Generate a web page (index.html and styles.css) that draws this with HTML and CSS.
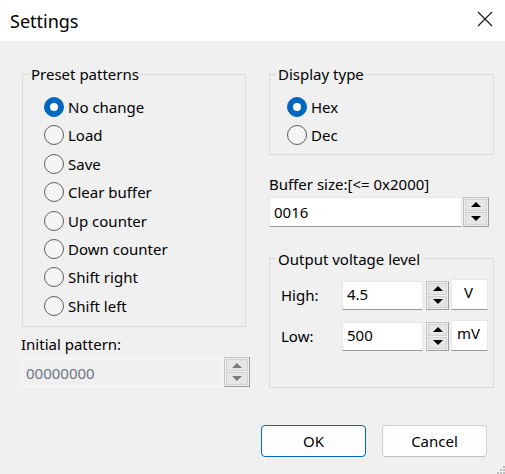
FILE: index.html
```
<!DOCTYPE html>
<html>
<head>
<meta charset="utf-8">
<link rel="stylesheet" href="styles.css">
</head>
<body>
<div class="window">
  <div class="titlebar">
    <span class="title">Settings</span>
    <svg class="close" width="16" height="16" viewBox="0 0 16 16"><path d="M1 1 L15 15 M15 1 L1 15" stroke="#1a1a1a" stroke-width="1.2" fill="none"/></svg>
  </div>
  <div class="main">
    <div class="col left">
      <fieldset class="group">
        <legend>Preset patterns</legend>
        <div class="group-body preset">
          <div class="radio-row"><span class="radio checked"></span><span>No change</span></div>
          <div class="radio-row"><span class="radio"></span><span>Load</span></div>
          <div class="radio-row"><span class="radio"></span><span>Save</span></div>
          <div class="radio-row"><span class="radio"></span><span>Clear buffer</span></div>
          <div class="radio-row"><span class="radio"></span><span>Up counter</span></div>
          <div class="radio-row"><span class="radio"></span><span>Down counter</span></div>
          <div class="radio-row"><span class="radio"></span><span>Shift right</span></div>
          <div class="radio-row"><span class="radio"></span><span>Shift left</span></div>
        </div>
      </fieldset>
      <div class="field-label initial-label">Initial pattern:</div>
      <div class="spin-row">
        <div class="edit disabled initial-edit">00000000</div>
        <div class="spin disabled-spin"><span class="sbtn"><i class="up"></i></span><span class="sbtn"><i class="down"></i></span></div>
      </div>
    </div>
    <div class="col right">
      <fieldset class="group">
        <legend>Display type</legend>
        <div class="group-body display">
          <div class="radio-row"><span class="radio checked"></span><span>Hex</span></div>
          <div class="radio-row"><span class="radio"></span><span>Dec</span></div>
        </div>
      </fieldset>
      <div class="field-label buffer-label">Buffer size:[&lt;= 0x2000]</div>
      <div class="spin-row">
        <div class="edit buffer-edit">0016</div>
        <div class="spin"><span class="sbtn"><i class="up"></i></span><span class="sbtn"><i class="down"></i></span></div>
      </div>
      <fieldset class="group voltage">
        <legend>Output voltage level</legend>
        <div class="group-body volt-body">
          <div class="volt-row">
            <span class="volt-label">High:</span>
            <div class="edit volt-edit">4.5</div>
            <div class="spin small"><span class="sbtn"><i class="up"></i></span><span class="sbtn"><i class="down"></i></span></div>
            <div class="edit unit">V</div>
          </div>
          <div class="volt-row">
            <span class="volt-label">Low:</span>
            <div class="edit volt-edit">500</div>
            <div class="spin small"><span class="sbtn"><i class="up"></i></span><span class="sbtn"><i class="down"></i></span></div>
            <div class="edit unit">mV</div>
          </div>
        </div>
      </fieldset>
    </div>
  </div>
  <div class="footer">
    <button class="btn default">OK</button>
    <button class="btn">Cancel</button>
  </div>
  <svg class="grip" width="8" height="8" viewBox="0 0 8 8"><rect x="6" y="0" width="2" height="2" fill="#bdbdbd"/><rect x="3" y="3" width="2" height="2" fill="#bdbdbd"/><rect x="6" y="3" width="2" height="2" fill="#bdbdbd"/><rect x="0" y="6" width="2" height="2" fill="#bdbdbd"/><rect x="3" y="6" width="2" height="2" fill="#bdbdbd"/><rect x="6" y="6" width="2" height="2" fill="#bdbdbd"/></svg>
</div>
</body>
</html>
```
FILE: styles.css
```
* { box-sizing: border-box; }
html, body { margin: 0; padding: 0; }
body {
  width: 505px;
  height: 474px;
  overflow: hidden;
  background: #f0f0f0;
  font-family: "Noto Sans", "Open Sans", sans-serif;
  font-size: 15px;
  color: #000;
}
.window { position: relative; width: 505px; height: 474px; }
.titlebar {
  height: 41px;
  background: #fff;
  display: flex;
  align-items: center;
  justify-content: space-between;
  padding: 0 12px 0 10px;
}
.title { font-size: 18px; color: #000; }
.close { margin-top: -3px; }
.main {
  display: grid;
  grid-template-columns: 228px 225px;
  column-gap: 19px;
  padding-left: 22px;
}
.col { display: flex; flex-direction: column; }
.group {
  margin: 23px 0 0 0;
  padding: 0;
  border: 1px solid #dadada;
  min-width: 0;
}
.left .group { width: 224px; }
.group legend {
  margin-left: 6px;
  padding: 0 2px;
  line-height: 20px;
  height: 20px;
}
.preset { padding: 8.8px 0 6px 21px; }
.display { padding: 8.8px 0 4px 17px; }
.radio-row {
  display: flex;
  align-items: center;
  height: 28.4px;
}
.radio {
  width: 20px;
  height: 20px;
  border-radius: 50%;
  border: 1px solid #5f5f5f;
  background: #f5f5f5;
  margin-right: 4px;
  flex: none;
  display: flex;
  align-items: center;
  justify-content: center;
}
.radio.checked {
  background: #0067c0;
  border-color: #0067c0;
}
.radio.checked::after {
  content: "";
  width: 8px;
  height: 8px;
  border-radius: 50%;
  background: #fff;
}
.field-label { line-height: 20px; }
.initial-label { margin-top: 7px; margin-left: -1px; }
.buffer-label { margin-top: 19px; }
.spin-row { display: flex; margin-top: 4px; gap: 1px; }
.right .spin-row { margin-top: 3px; }
.edit {
  background: #fff;
  border: 1px solid #e6e6e6;
  border-bottom-color: #9a9a9a;
  padding: 5px 0 0 4px;
  line-height: 18px;
  white-space: nowrap;
}
.initial-edit {
  width: 202px;
  height: 29px;
  background: #f0f0f0;
  border: 1px solid #fafafa;
  color: #6d7585;
  padding-left: 3px;
}
.buffer-edit { width: 193px; height: 30px; }
.spin {
  width: 26px;
  height: 30px;
  border: 1px solid #c4c4c4;
  border-right-color: #9c9c9c;
  border-bottom-color: #9c9c9c;
  background: #f0f0f0;
  padding: 1px;
  display: flex;
  flex-direction: column;
  gap: 1px;
}
.initial-edit + .spin { height: 30px; margin-top: -1px; }
.sbtn {
  flex: 1;
  background: #e6e6e6;
  border: 1px solid #d2d2d2;
  display: flex;
  align-items: center;
  justify-content: center;
}
.sbtn i { width: 0; height: 0; display: block; }
.sbtn i.up {
  border-left: 5px solid transparent;
  border-right: 5px solid transparent;
  border-bottom: 5px solid #000;
}
.sbtn i.down {
  border-left: 5px solid transparent;
  border-right: 5px solid transparent;
  border-top: 5px solid #000;
}
.disabled-spin .sbtn i.up { border-bottom-color: #7a7a7a; }
.disabled-spin .sbtn i.down { border-top-color: #7a7a7a; }
.voltage { margin-top: 22px; width: 225px; }
.volt-body { padding: 12px 0 36px 11px; display: flex; flex-direction: column; gap: 12px; }
.volt-row { display: flex; align-items: center; height: 29px; }
.volt-label { width: 61px; }
.volt-edit { width: 81px; height: 29px; padding-top: 3px; }
.spin.small { width: 23px; height: 29px; margin-left: 3px; }
.spin.small .sbtn i.up, .spin.small .sbtn i.down { border-left-width: 5px; border-right-width: 5px; }
.unit {
  width: 37px;
  height: 31px;
  margin-left: 2px;
  text-align: center;
  padding: 3px 2px 0 0;
  margin-top: -2px;
}
.footer {
  display: flex;
  justify-content: flex-end;
  gap: 16px;
  padding-right: 18px;
  margin-top: 37px;
}
.btn {
  width: 105px;
  height: 32px;
  background: #fdfdfd;
  border: 1px solid #d0d0d0;
  border-bottom-color: #bdbdbd;
  border-radius: 4px;
  font-family: "Noto Sans", "Open Sans", sans-serif;
  font-size: 15px;
  color: #000;
  padding: 0;
}
.btn.default { border-color: #0067c0; }
.grip { position: absolute; right: 0; bottom: 0; }
```
